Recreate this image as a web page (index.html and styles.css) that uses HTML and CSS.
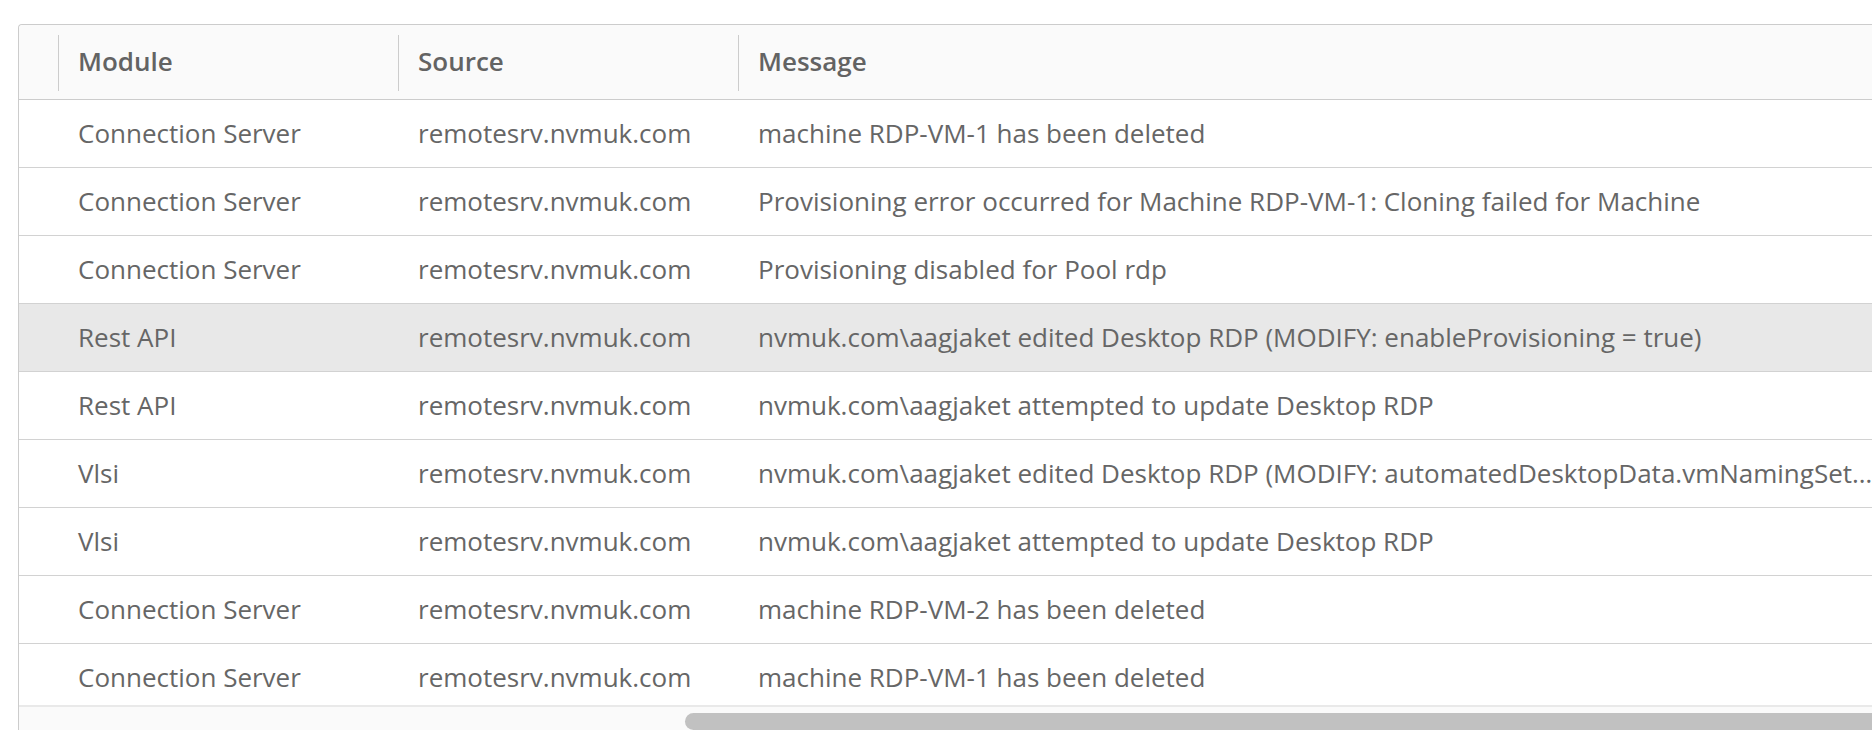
FILE: index.html
```html
<!DOCTYPE html>
<html lang="en">
<head>
<meta charset="utf-8">
<title>Events</title>
<link rel="stylesheet" href="styles.css">
</head>
<body>
<div class="page">
  <div class="datagrid">
    <div class="dg-head">
      <div class="hcell hcell-empty"></div>
      <div class="hcell"><span class="sep"></span><span class="hlabel">Module</span></div>
      <div class="hcell"><span class="sep"></span><span class="hlabel">Source</span></div>
      <div class="hcell"><span class="sep"></span><span class="hlabel">Message</span></div>
    </div>
    <div class="dg-body">
      <div class="row"><div class="cell cell-empty"></div><div class="cell">Connection Server</div><div class="cell">remotesrv.nvmuk.com</div><div class="cell msg">machine RDP-VM-1 has been deleted</div></div>
      <div class="row"><div class="cell cell-empty"></div><div class="cell">Connection Server</div><div class="cell">remotesrv.nvmuk.com</div><div class="cell msg">Provisioning error occurred for Machine RDP-VM-1: Cloning failed for Machine</div></div>
      <div class="row"><div class="cell cell-empty"></div><div class="cell">Connection Server</div><div class="cell">remotesrv.nvmuk.com</div><div class="cell msg">Provisioning disabled for Pool rdp</div></div>
      <div class="row row-hover"><div class="cell cell-empty"></div><div class="cell">Rest API</div><div class="cell">remotesrv.nvmuk.com</div><div class="cell msg">nvmuk.com\aagjaket edited Desktop RDP (MODIFY: enableProvisioning = true)</div></div>
      <div class="row"><div class="cell cell-empty"></div><div class="cell">Rest API</div><div class="cell">remotesrv.nvmuk.com</div><div class="cell msg">nvmuk.com\aagjaket attempted to update Desktop RDP</div></div>
      <div class="row"><div class="cell cell-empty"></div><div class="cell">Vlsi</div><div class="cell">remotesrv.nvmuk.com</div><div class="cell msg">nvmuk.com\aagjaket edited Desktop RDP (MODIFY: automatedDesktopData.vmNamingSettings.patternNamingSettings.namingPattern = RDP-VM-{n})</div></div>
      <div class="row"><div class="cell cell-empty"></div><div class="cell">Vlsi</div><div class="cell">remotesrv.nvmuk.com</div><div class="cell msg">nvmuk.com\aagjaket attempted to update Desktop RDP</div></div>
      <div class="row"><div class="cell cell-empty"></div><div class="cell">Connection Server</div><div class="cell">remotesrv.nvmuk.com</div><div class="cell msg">machine RDP-VM-2 has been deleted</div></div>
      <div class="row"><div class="cell cell-empty"></div><div class="cell">Connection Server</div><div class="cell">remotesrv.nvmuk.com</div><div class="cell msg">machine RDP-VM-1 has been deleted</div></div>
    </div>
    <div class="hscroll"><div class="thumb"></div></div>
  </div>
</div>
</body>
</html>
```
FILE: styles.css
```css
html, body {
  margin: 0;
  padding: 0;
  background: #ffffff;
  overflow: hidden;
}

.page {
  width: 1872px;
  height: 730px;
  overflow: hidden;
  padding: 24px 0 0 18px;
  box-sizing: border-box;
  font-family: "Open Sans", "Liberation Sans", sans-serif;
  font-size: 26px;
  color: #666666;
}

.datagrid {
  width: 1940px;
  border: 1px solid #cccccc;
  border-bottom: none;
  border-radius: 4px 4px 0 0;
  background: #ffffff;
}

.dg-head,
.row {
  display: grid;
  grid-template-columns: 39px 340px 340px 1200px;
}

.dg-head {
  height: 75px;
  box-sizing: border-box;
  background: #fafafa;
  border-bottom: 1px solid #cccccc;
  border-radius: 4px 4px 0 0;
}

.hcell {
  display: flex;
  align-items: center;
  padding-top: 2px;
}

.sep {
  width: 1px;
  height: 56px;
  background: #cccccc;
  flex: none;
}

.hlabel {
  margin-left: 19px;
  margin-top: -5px;
  font-weight: 600;
  color: #636363;
}

.dg-body {
  height: 605px;
  overflow: hidden;
}

.row {
  height: 68px;
  box-sizing: border-box;
  border-bottom: 1px solid #d2d2d2;
}

.row-hover {
  background: #e8e8e8;
}

.cell {
  display: flex;
  align-items: center;
  padding-left: 20px;
  padding-bottom: 1px;
  white-space: nowrap;
  overflow: hidden;
}

.cell-empty {
  padding-left: 0;
}

.msg {
  display: block;
  line-height: 66px;
  text-overflow: ellipsis;
  padding-right: 62px;
}

.hscroll {
  height: 30px;
  box-sizing: border-box;
  border-top: 2px solid #e9e9e9;
  background: #fafafa;
  padding: 6px 0 0 666px;
  display: flex;
}

.thumb {
  width: 1400px;
  height: 17px;
  border-radius: 9px;
  background: #c1c1c1;
}
```
